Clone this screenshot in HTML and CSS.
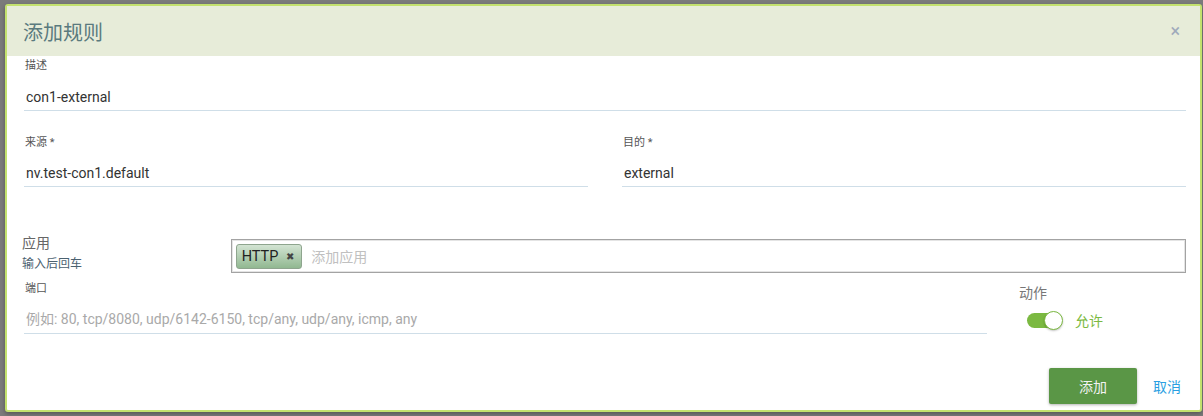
FILE: index.html
```html
<!DOCTYPE html>
<html lang="zh">
<head>
<meta charset="utf-8">
<title>添加规则</title>
<link rel="stylesheet" href="styles.css">
</head>
<body>
<div class="dialog">
  <div class="header">
    <h1 class="title">添加规则</h1>
    <span class="close">×</span>
  </div>
  <div class="content">
    <div class="field field-desc">
      <div class="label">描述</div>
      <div class="input">con1-external</div>
    </div>
    <div class="row-two">
      <div class="field">
        <div class="label">来源 *</div>
        <div class="input">nv.test-con1.default</div>
      </div>
      <div class="field">
        <div class="label">目的 *</div>
        <div class="input">external</div>
      </div>
    </div>
    <div class="row-app">
      <div class="app-labels">
        <div class="app-title">应用</div>
        <div class="app-hint">输入后回车</div>
      </div>
      <div class="tag-box">
        <span class="tag">HTTP <span class="tag-x">✖</span></span>
        <span class="tag-placeholder">添加应用</span>
      </div>
    </div>
    <div class="row-port">
      <div class="field field-port">
        <div class="label">端口</div>
        <div class="input placeholder">例如: 80, tcp/8080, udp/6142-6150, tcp/any, udp/any, icmp, any</div>
      </div>
      <div class="action">
        <div class="action-title">动作</div>
        <div class="action-row">
          <span class="toggle"><span class="knob"></span></span>
          <span class="allow">允许</span>
        </div>
      </div>
    </div>
    <div class="footer">
      <button class="btn-add">添加</button>
      <span class="btn-cancel">取消</span>
    </div>
  </div>
</div>
</body>
</html>
```

FILE: styles.css
```css
* { box-sizing: border-box; }
html, body {
  margin: 0;
  padding: 0;
  background: #7b7b7b;
  font-family: Roboto, "Noto Sans CJK SC", sans-serif;
}
body { height: 416px; overflow: hidden; }
.dialog {
  margin: 4px 1px 0 5px;
  height: 408px;
  border: 2px solid #c3e16e;
  border-radius: 3px;
  background: #fff;
  display: flex;
  flex-direction: column;
  box-shadow: 0 2px 4px rgba(0,0,0,0.3);
}
.header {
  height: 50px;
  background: #e7ecd9;
  display: flex;
  align-items: center;
  justify-content: space-between;
  padding: 0 20px 0 16px;
}
.title {
  margin: 0;
  font-weight: 400;
  font-size: 20px;
  color: #5a7a7e;
  letter-spacing: 0;
}
.close {
  font-size: 18px;
  color: #a0aabb;
  line-height: 1;
}
.content {
  padding: 0 14px 0 17px;
  flex: 1;
  display: flex;
  flex-direction: column;
}
.label {
  font-size: 11px;
  line-height: 16px;
  color: #555;
  padding-left: 1px;
}
.input {
  font-size: 14px;
  line-height: 24px;
  color: #333;
  padding: 12px 0 1px 2px;
  border-bottom: 1px solid #cfdee8;
}
.field-desc { margin-top: 2px; }
.field-desc .input { padding-top: 11px; }
.row-two {
  display: grid;
  grid-template-columns: 1fr 1fr;
  column-gap: 34px;
  margin-top: 24px;
}
.row-two .input { padding-top: 10px; }
.row-app {
  display: flex;
  margin-top: 52px;
}
.app-labels {
  width: 209px;
  margin-left: -2px;
  margin-top: -6px;
}
.app-title {
  font-size: 14px;
  line-height: 20px;
  color: #666;
}
.app-hint {
  font-size: 12px;
  line-height: 16px;
  color: #4b6170;
  margin-top: 3px;
}
.tag-box {
  width: 957px;
  height: 34px;
  border: 1px solid #a3a3a3;
  box-shadow: inset 0 0 0 1px #e4e4e4;
  display: flex;
  align-items: center;
  padding-left: 4px;
}
.tag {
  display: inline-flex;
  align-items: center;
  height: 25px;
  padding: 0 7px 0 5px;
  border: 1px solid #8ea58e;
  border-radius: 3px;
  background: linear-gradient(#d3e4d3, #91b891);
  color: #222;
  font-size: 14.5px;
}
.tag-x {
  font-size: 10px;
  color: #444;
  margin-left: 8px;
}
.tag-placeholder {
  margin-left: 9px;
  font-size: 14px;
  color: #c0c0c0;
}
.row-port {
  display: flex;
  margin-top: 8px;
}
.field-port { width: 963px; }
.field-port .input { padding-top: 10px; padding-bottom: 2px; }
.placeholder { color: #a9a9a9; }
.action {
  margin-left: 32px;
  padding-top: 2px;
}
.action-title {
  font-size: 14px;
  line-height: 20px;
  color: #777;
}
.action-row {
  display: flex;
  align-items: center;
  margin-top: 7px;
  margin-left: 8px;
}
.toggle {
  position: relative;
  width: 35px;
  height: 15px;
  border-radius: 8px;
  background: #7bb941;
}
.knob {
  position: absolute;
  right: -1px;
  top: -2px;
  width: 19px;
  height: 19px;
  border-radius: 50%;
  background: #fff;
  border: 1px solid #7bb941;
  box-shadow: 0 1px 2px rgba(0,0,0,0.25);
}
.allow {
  margin-left: 13px;
  font-size: 14px;
  color: #7bb941;
}
.footer {
  display: flex;
  justify-content: flex-end;
  align-items: center;
  margin-top: 34px;
}
.btn-add {
  width: 88px;
  height: 36px;
  border: none;
  border-radius: 2px;
  background: #5a9646;
  color: #f2f2f2;
  font-family: inherit;
  font-size: 14px;
  box-shadow: 0 1px 3px rgba(0,0,0,0.3);
}
.btn-cancel {
  margin-left: 16px;
  margin-right: 5px;
  font-size: 14px;
  color: #2a9fe2;
}
```
